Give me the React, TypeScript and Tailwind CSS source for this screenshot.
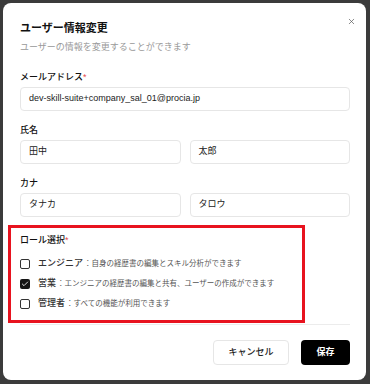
import { X, Check } from "lucide-react";

type Role = { name: string; desc: string; checked: boolean };

const roles: Role[] = [
  { name: "エンジニア", desc: "：自身の経歴書の編集とスキル分析ができます", checked: false },
  { name: "営業", desc: "：エンジニアの経歴書の編集と共有、ユーザーの作成ができます", checked: true },
  { name: "管理者", desc: "：すべての機能が利用できます", checked: false },
];

const Field = ({ value }: { value: string }) => (
  <div className="h-[24px] w-full rounded-[4px] border border-[#e6e6e6] bg-white pl-[8px] flex items-center text-[9px] text-[#222]">
    {value}
  </div>
);

export default function App() {
  return (
    <div className="min-h-[384px] w-[370px] bg-[#3b3b3b] pt-[3px] pl-[3px] font-['Liberation_Sans','Noto_Sans_CJK_JP',sans-serif]">
      <div className="relative w-[363px] h-[377px] rounded-[8px] bg-white pl-[17px] pr-[16px] pt-[18px]">
        {/* 閉じる */}
        <button className="absolute right-[10px] top-[14px] text-[#555]">
          <X size={9} strokeWidth={1.8} />
        </button>

        {/* ヘッダー */}
        <h2 className="text-[11px] leading-[14px] font-bold text-[#111]">ユーザー情報変更</h2>
        <p className="mt-[6px] text-[9px] leading-[12px] text-[#999]">
          ユーザーの情報を変更することができます
        </p>

        {/* メール */}
        <div className="mt-[18px]">
          <label className="block text-[9px] leading-[12px] font-medium text-[#111]">
            メールアドレス<span className="text-[#e5484d]">*</span>
          </label>
          <div className="mt-[4px]">
            <Field value="dev-skill-suite+company_sal_01@procia.jp" />
          </div>
        </div>

        {/* 氏名 */}
        <div className="mt-[13px]">
          <label className="block text-[9px] leading-[12px] font-medium text-[#111]">氏名</label>
          <div className="mt-[4px] grid grid-cols-2 gap-[9px]">
            <Field value="田中" />
            <Field value="太郎" />
          </div>
        </div>

        {/* カナ */}
        <div className="mt-[13px]">
          <label className="block text-[9px] leading-[12px] font-medium text-[#111]">カナ</label>
          <div className="mt-[4px] grid grid-cols-2 gap-[9px]">
            <Field value="タナカ" />
            <Field value="タロウ" />
          </div>
        </div>

        {/* ロール選択 */}
        <div className="mt-[8px] -ml-[12px] w-[297px] border-[3px] border-[#e8131f] pl-[9px] pt-[6px] pb-[6px]">
          <label className="block text-[9px] leading-[12px] font-medium text-[#111]">
            ロール選択<span className="text-[#e5484d]">*</span>
          </label>
          <div className="mt-[8px]">
            {roles.map((r) => (
              <div key={r.name} className="h-[20px] flex items-center">
                <span
                  className={
                    r.checked
                      ? "w-[10px] h-[10px] rounded-[2px] bg-[#151515] flex items-center justify-center text-white"
                      : "w-[10px] h-[10px] rounded-[2px] border border-[#333] bg-white"
                  }
                >
                  {r.checked && <Check size={8} strokeWidth={2.5} />}
                </span>
                <span className="ml-[8px] text-[9px] font-medium text-[#333]">{r.name}</span>
                <span className="ml-[1px] text-[7.5px] text-[#555]">{r.desc}</span>
              </div>
            ))}
          </div>
        </div>

        {/* フッター */}
        <div className="mt-[1px] border-t border-[#ececec] pt-[15px] flex justify-end gap-[12px]">
          <button className="h-[25px] w-[76px] rounded-[4px] border border-[#e6e6e6] bg-white text-[9px] font-medium text-[#222]">
            キャンセル
          </button>
          <button className="h-[25px] w-[49px] rounded-[4px] bg-black text-[9px] font-bold text-white">
            保存
          </button>
        </div>
      </div>
    </div>
  );
}
